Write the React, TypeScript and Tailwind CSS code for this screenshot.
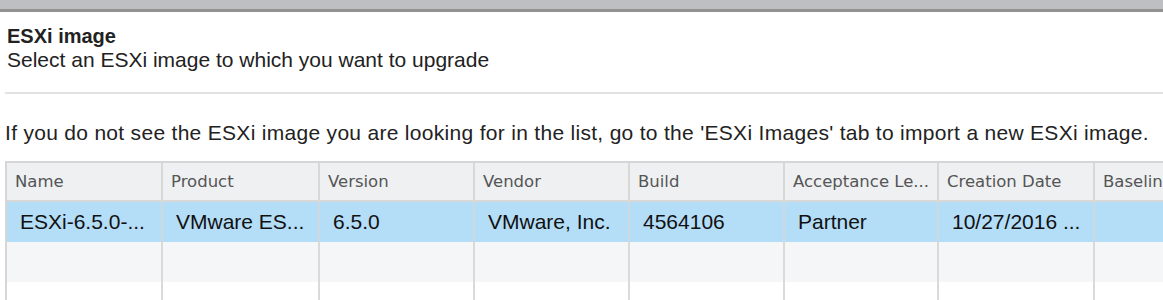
import React from 'react';

const columns = [
  { title: 'Name', width: 'w-[156px]' },
  { title: 'Product', width: 'w-[157px]' },
  { title: 'Version', width: 'w-[155px]' },
  { title: 'Vendor', width: 'w-[155px]' },
  { title: 'Build', width: 'w-[155px]' },
  { title: 'Acceptance Le...', width: 'w-[154px]' },
  { title: 'Creation Date', width: 'w-[156px]' },
  { title: 'Baseline', width: 'w-[156px]' },
];

const selectedRow = [
  'ESXi-6.5.0-...',
  'VMware ES...',
  '6.5.0',
  'VMware, Inc.',
  '4564106',
  'Partner',
  '10/27/2016 ...',
  '',
];

export default function App() {
  return (
    <div className="h-[300px] w-[1163px] overflow-hidden bg-white font-['Liberation_Sans',Arial,sans-serif] text-[#222]">
      {/* window chrome */}
      <div className="h-[9px] bg-[#bebfc3]" />
      <div className="h-[3px] bg-[#929292]" />

      <div className="pl-[7px] pt-[12px]">
        <h2 className="text-[20px] font-bold leading-[24px]">ESXi image</h2>
        <p className="text-[21px] leading-[24px]">Select an ESXi image to which you want to upgrade</p>
      </div>

      <div className="ml-[5px] mt-[20px] h-[2px] bg-[#e2e2e2]" />

      <p className="mt-[27px] whitespace-nowrap pl-[5px] text-[21px] leading-[24px] tracking-[0.3px]">
        If you do not see the ESXi image you are looking for in the list, go to the 'ESXi Images' tab to import a new ESXi image.
      </p>

      {/* image grid */}
      <div className="ml-[5px] mt-[16px] w-max border-l-2 border-t-2 border-[#d6d6d6]">
        <div className="flex h-[39px] bg-[#eef0f2]">
          {columns.map((c) => (
            <div
              key={c.title}
              className={`${c.width} flex shrink-0 items-center overflow-hidden whitespace-nowrap border-r-2 border-b-2 border-[#d8d8d8] pl-[8px] pt-[2px] font-['DejaVu_Sans',sans-serif] text-[16.5px] text-[#555]`}
            >
              {c.title}
            </div>
          ))}
        </div>
        <div className="flex h-[40px] bg-[#b4ddf8]">
          {columns.map((c, i) => (
            <div
              key={c.title}
              className={`${c.width} flex shrink-0 items-center overflow-hidden whitespace-nowrap border-r-2 border-[#cfd8de] pl-[13px] text-[21px] text-[#111]`}
            >
              {selectedRow[i]}
            </div>
          ))}
        </div>
        <div className="flex h-[40px] bg-[#f4f6f8]">
          {columns.map((c) => (
            <div key={c.title} className={`${c.width} shrink-0 border-r-2 border-[#dadada]`} />
          ))}
        </div>
        <div className="flex h-[40px] bg-white">
          {columns.map((c) => (
            <div key={c.title} className={`${c.width} shrink-0 border-r-2 border-[#dadada]`} />
          ))}
        </div>
      </div>
    </div>
  );
}
